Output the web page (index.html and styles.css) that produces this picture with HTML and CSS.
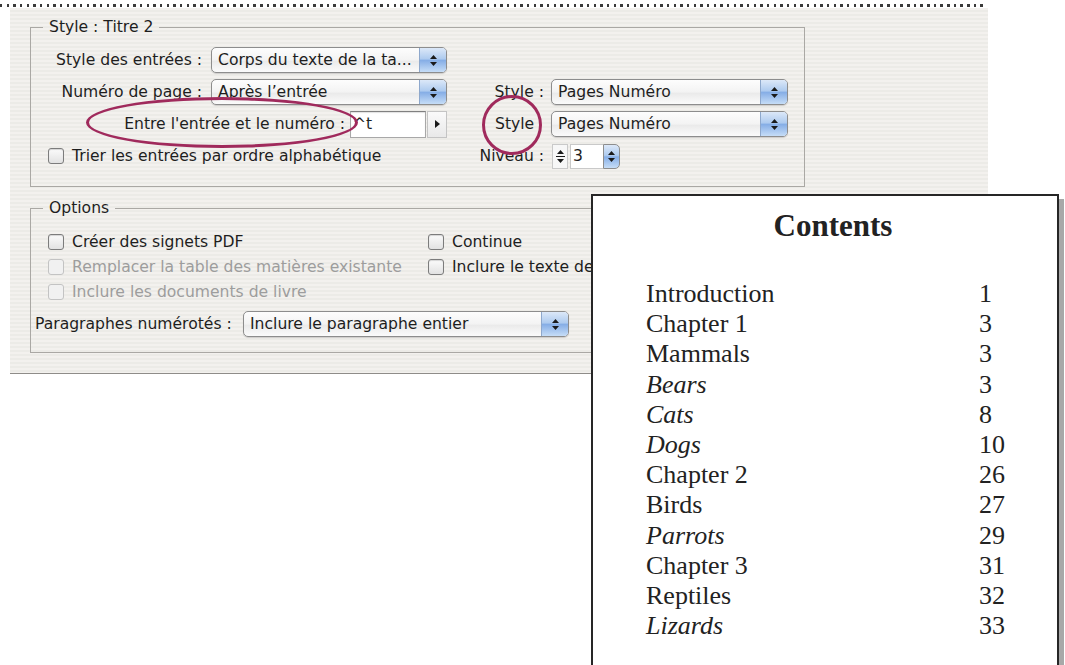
FILE: index.html
```html
<!DOCTYPE html>
<html>
<head>
<meta charset="utf-8">
<title>Table des matières</title>
<link rel="stylesheet" href="styles.css">
</head>
<body>
<div class="page">
  <div class="rule"></div>
  <div class="panel">

    <fieldset class="group group-style">
      <legend>Style : Titre 2</legend>
      <div class="row">
        <span class="label label-main">Style des entrées :</span>
        <span class="popup popup-left">
          <span class="popup-text">Corps du texte de la ta...</span>
          <span class="stepper"><svg width="7" height="11" viewBox="0 0 7 11"><path d="M3.5 0 L7 4 H0 Z M3.5 11 L7 7 H0 Z"/></svg></span>
        </span>
      </div>
      <div class="row">
        <span class="label label-main">Numéro de page :</span>
        <span class="popup popup-left">
          <span class="popup-text">Après l’entrée</span>
          <span class="stepper"><svg width="7" height="11" viewBox="0 0 7 11"><path d="M3.5 0 L7 4 H0 Z M3.5 11 L7 7 H0 Z"/></svg></span>
        </span>
        <span class="label label-side">Style :</span>
        <span class="popup popup-right">
          <span class="popup-text">Pages Numéro</span>
          <span class="stepper"><svg width="7" height="11" viewBox="0 0 7 11"><path d="M3.5 0 L7 4 H0 Z M3.5 11 L7 7 H0 Z"/></svg></span>
        </span>
      </div>
      <div class="row">
        <span class="label label-wide">Entre l'entrée et le numéro :</span>
        <span class="field field-sep">^t</span>
        <span class="arrow-btn"><svg width="5" height="8" viewBox="0 0 5 8"><path d="M0 0 L5 4 L0 8 Z"/></svg></span>
        <span class="label label-side label-plain">Style</span>
        <span class="popup popup-right">
          <span class="popup-text">Pages Numéro</span>
          <span class="stepper"><svg width="7" height="11" viewBox="0 0 7 11"><path d="M3.5 0 L7 4 H0 Z M3.5 11 L7 7 H0 Z"/></svg></span>
        </span>
      </div>
      <div class="row">
        <span class="check-item check-wide"><span class="check"></span>Trier les entrées par ordre alphabétique</span>
        <span class="label label-side">Niveau :</span>
        <span class="spin">
          <span class="spin-arrows"><svg width="9" height="15" viewBox="0 0 9 15"><path d="M4.5 1 L8 5 H1 Z M4.5 14 L8 10 H1 Z"/><rect x="0" y="7" width="9" height="1"/></svg></span>
          <span class="spin-value">3</span>
          <span class="stepper stepper-small"><svg width="7" height="11" viewBox="0 0 7 11"><path d="M3.5 0 L7 4 H0 Z M3.5 11 L7 7 H0 Z"/></svg></span>
        </span>
      </div>
    </fieldset>

    <fieldset class="group group-options">
      <legend>Options</legend>
      <div class="options-grid">
        <span class="check-item"><span class="check"></span>Créer des signets PDF</span>
        <span class="check-item check-right"><span class="check"></span>Continue</span>
        <span class="check-item disabled"><span class="check"></span>Remplacer la table des matières existante</span>
        <span class="check-item check-right"><span class="check"></span>Inclure le texte de niveau masqué</span>
        <span class="check-item disabled"><span class="check"></span>Inclure les documents de livre</span>
      </div>
      <div class="row">
        <span class="label label-para">Paragraphes numérotés :</span>
        <span class="popup popup-para">
          <span class="popup-text">Inclure le paragraphe entier</span>
          <span class="stepper"><svg width="7" height="11" viewBox="0 0 7 11"><path d="M3.5 0 L7 4 H0 Z M3.5 11 L7 7 H0 Z"/></svg></span>
        </span>
      </div>
    </fieldset>

  </div>

  <div class="mark mark-ellipse"></div>
  <div class="mark mark-circle"></div>

  <div class="toc">
    <h2 class="toc-title">Contents</h2>
    <div class="toc-list">
      <span>Introduction</span><span>1</span>
      <span>Chapter 1</span><span>3</span>
      <span>Mammals</span><span>3</span>
      <span class="sub">Bears</span><span>3</span>
      <span class="sub">Cats</span><span>8</span>
      <span class="sub">Dogs</span><span>10</span>
      <span>Chapter 2</span><span>26</span>
      <span>Birds</span><span>27</span>
      <span class="sub">Parrots</span><span>29</span>
      <span>Chapter 3</span><span>31</span>
      <span>Reptiles</span><span>32</span>
      <span class="sub">Lizards</span><span>33</span>
    </div>
  </div>
</div>
</body>
</html>
```

FILE: styles.css
```css
body {
  margin: 0;
  background-color: white;
  color: #1e1e1e;
  font-family: "DejaVu Sans", sans-serif;
  font-size: 15.6px;
}
.page {
  position: relative;
  width: 1065px;
  height: 665px;
  overflow: hidden;
}
.rule {
  margin-top: 4px;
  width: 987px;
  height: 3px;
  background-image: repeating-linear-gradient(to right, #3a3a3a 0 2.4px, transparent 2.4px 6.67px);
}

/* dialog panel */
.panel {
  margin: 1px 0 0 10px;
  width: 958px;
  padding: 10px 0 20px 20px;
  background: repeating-linear-gradient(to bottom, #f3f1ee 0 2px, #ecebe7 2px 4px);
  border-bottom: 1px solid #8e8c89;
}
.group {
  margin: 0;
  width: 775px;
  box-sizing: border-box;
  border: 1px solid #aaa8a4;
  padding: 8px 0 14px 0;
}
.group legend {
  margin-left: 12px;
  padding: 0 6px;
  line-height: 18px;
}
.group-options {
  margin-top: 12px;
  padding: 12px 0 12px 0;
}
.row {
  display: flex;
  align-items: center;
  height: 32px;
  white-space: nowrap;
}
.label {
  flex: none;
}
.label-main {
  width: 171px;
  margin-right: 9px;
  text-align: right;
}
.label-side {
  width: 97px;
  margin-right: 7px;
  text-align: right;
}
.label-plain {
  text-align: left;
  padding-left: 48px;
  box-sizing: border-box;
}
.label-wide {
  width: 314px;
  margin-right: 5px;
  text-align: right;
}
.label-para {
  width: 204px;
  padding-left: 4px;
  margin-right: 8px;
  box-sizing: border-box;
}

/* aqua popup menus */
.popup {
  flex: none;
  display: flex;
  align-items: center;
  height: 26px;
  box-sizing: border-box;
  border: 1px solid #8d8d8d;
  border-radius: 5px;
  background: linear-gradient(#fdfdfd, #f3f3f3 50%, #eaeaea 55%, #fbfbfb);
  box-shadow: 0 1px 1px rgba(0, 0, 0, 0.15);
  overflow: hidden;
}
.popup-left { width: 236px; }
.popup-right { width: 237px; }
.popup-para { width: 326px; }
.popup-text {
  flex: 1;
  padding-left: 6px;
  overflow: hidden;
}
.stepper {
  flex: none;
  width: 26px;
  align-self: stretch;
  display: flex;
  align-items: center;
  justify-content: center;
  background: linear-gradient(#dce8f8, #aecbef 45%, #86aee6 52%, #c6ddf7);
  border-left: 1px solid #8ea8cc;
}
.stepper svg,
.spin-arrows svg,
.arrow-btn svg {
  fill: #1a1a1a;
}
.stepper-small {
  width: 15px;
  border: 1px solid #8d8d8d;
  border-radius: 0 5px 5px 0;
}

/* text fields */
.field {
  flex: none;
  display: flex;
  align-items: center;
  height: 27px;
  box-sizing: border-box;
  border: 1px solid #a8a8a8;
  border-top-color: #808080;
  background: white;
  box-shadow: inset 0 1px 1px rgba(0, 0, 0, 0.12);
  padding-left: 2px;
}
.field-sep { width: 76px; }
.arrow-btn {
  flex: none;
  width: 20px;
  height: 27px;
  margin-left: 1px;
  box-sizing: border-box;
  border: 1px solid #c4c4c4;
  background: linear-gradient(#fafafa, #e9e9e9);
  display: flex;
  align-items: center;
  justify-content: center;
}
.spin {
  display: flex;
  height: 25px;
  margin-left: 1px;
}
.spin-arrows {
  width: 16px;
  box-sizing: border-box;
  border: 1px solid #c9c9c9;
  background: #f7f7f7;
  display: flex;
  align-items: center;
  justify-content: center;
}
.spin-value {
  width: 33px;
  margin-left: 2px;
  box-sizing: border-box;
  border: 1px solid #c9c9c9;
  border-right: none;
  background: white;
  padding-left: 2px;
  display: flex;
  align-items: center;
}

/* checkboxes */
.check-item {
  display: flex;
  align-items: center;
  padding-left: 17px;
  white-space: nowrap;
}
.check-wide {
  width: 399px;
  flex: none;
}
.check-right {
  padding-left: 0;
}
.check {
  flex: none;
  width: 16px;
  height: 16px;
  margin-right: 8px;
  box-sizing: border-box;
  border: 1px solid #7c7c7c;
  border-radius: 3px;
  background: linear-gradient(#fbfbfb, #e2e2e2);
  box-shadow: inset 0 1px 1px rgba(0, 0, 0, 0.15);
}
.disabled {
  color: #9d9d9d;
}
.disabled .check {
  border-color: #c3c3c3;
  background: #f1f1f1;
  box-shadow: none;
}
.options-grid {
  display: grid;
  grid-template-columns: 397px 1fr;
  grid-auto-rows: 25px;
}
.group-options .row {
  margin-top: 4px;
}

/* red annotation marks */
.mark {
  position: absolute;
  box-sizing: border-box;
  border: 3px solid #a02a5c;
  border-radius: 50%;
}
.mark-ellipse {
  left: 86px;
  top: 97px;
  width: 272px;
  height: 51px;
}
.mark-circle {
  left: 482px;
  top: 95px;
  width: 60px;
  height: 60px;
}

/* sample table of contents */
.toc {
  position: absolute;
  left: 591px;
  top: 194px;
  width: 468px;
  height: 473px;
  box-sizing: border-box;
  border: 2px solid #262626;
  background: white;
  box-shadow: 5px 5px 0 #a8a8a8;
  font-family: "Liberation Serif", serif;
  color: #222;
}
.toc-title {
  margin: 0;
  padding: 12px 0 0 16px;
  font-size: 31px;
  line-height: 36px;
  text-align: center;
}
.toc-list {
  display: grid;
  grid-template-columns: 333px auto;
  margin-top: 35px;
  padding-left: 53px;
  font-size: 26px;
  line-height: 30.2px;
}
.toc-list .sub {
  font-style: italic;
}
```
